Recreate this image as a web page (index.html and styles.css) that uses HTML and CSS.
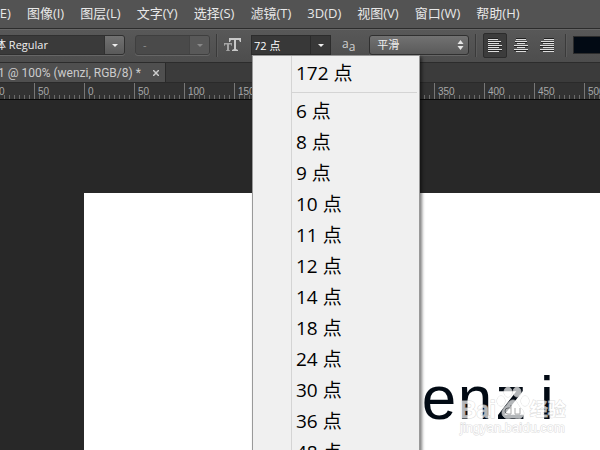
FILE: index.html
```html
<!DOCTYPE html>
<html lang="zh-CN">
<head>
  <meta charset="UTF-8">
  <meta name="viewport" content="width=device-width, initial-scale=1.0">
  <title>wenzi</title>
  <link rel="stylesheet" href="styles.css">
</head>
<body>
  <nav class="menubar">
    <a href="#">编辑(E)</a>
    <a href="#">图像(I)</a>
    <a href="#">图层(L)</a>
    <a href="#">文字(Y)</a>
    <a href="#">选择(S)</a>
    <a href="#">滤镜(T)</a>
    <a href="#">3D(D)</a>
    <a href="#">视图(V)</a>
    <a href="#">窗口(W)</a>
    <a href="#">帮助(H)</a>
  </nav>

  <div class="options">
    <div class="combo font-style">
      <select aria-label="字体样式"><option>黑体 Regular</option></select>
      <span class="arrow"></span>
    </div>
    <div class="combo weight">
      <select aria-label="字重" disabled><option>-</option></select>
      <span class="arrow"></span>
    </div>
    <span class="divider"></span>

    <label class="size-icon" for="font-size" aria-label="字体大小">
      <svg width="18" height="16" viewBox="0 0 18 16">
        <path d="M5 1h12v4h-1l-1-2h-3v9l2 1v1H8v-1l2-1V3H7L6 5H5z" fill="#c8c8c8"/>
        <path d="M0 6h8v3H7.500L7 7.500H5V13l1 .5v.5H2v-.5L3 13V7.500H1L.5 9H0z" fill="#a4a4a4"/>
      </svg>
    </label>
    <div class="size-box">
      <input id="font-size" type="text" value="72 点">
      <button class="size-open" aria-label="展开"><span class="tri"></span></button>
      <ul class="size-menu">
        <li>172 点</li>
        <li class="line"></li>
        <li>6 点</li>
        <li>8 点</li>
        <li>9 点</li>
        <li>10 点</li>
        <li>11 点</li>
        <li>12 点</li>
        <li>14 点</li>
        <li>18 点</li>
        <li>24 点</li>
        <li>30 点</li>
        <li>36 点</li>
        <li>48 点</li>
      </ul>
    </div>

    <label class="aa" for="smooth"><span>a</span><span class="low">a</span></label>
    <div class="combo smooth">
      <select id="smooth"><option>平滑</option></select>
      <svg class="updown" width="7" height="10" viewBox="0 0 7 10">
        <path d="M3.500 0L6.500 4h-6zM3.500 10L6.500 6h-6z" fill="#e6e6e6"/>
      </svg>
    </div>
    <span class="divider"></span>

    <div class="aligns">
      <button class="align active" aria-label="左对齐">
        <svg width="14" height="14" viewBox="0 0 14 14">
          <path d="M0 0h10v1H0zM0 4h13v1H0zM0 8h14v1H0zM0 12h14v1H0z" fill="#222"/>
          <path d="M0 1h10v1H0zM0 3h13v1H0zM0 5h11v1H0zM0 7h14v1H0zM0 9h11v1H0zM0 11h14v1H0zM0 13h11v1H0z" fill="#ddd"/>
        </svg>
      </button>
      <button class="align" aria-label="居中对齐">
        <svg width="14" height="14" viewBox="0 0 14 14">
          <path d="M2 0h10v1H2zM1 4h12v1H1zM0 8h14v1H0zM0 12h14v1H0z" fill="#222"/>
          <path d="M2 1h10v1H2zM1 3h12v1H1zM3 5h8v1H3zM0 7h14v1H0zM3 9h8v1H3zM0 11h14v1H0zM2 13h10v1H2z" fill="#ddd"/>
        </svg>
      </button>
      <button class="align" aria-label="右对齐">
        <svg width="14" height="14" viewBox="0 0 14 14">
          <path d="M4 0h10v1H4zM1 4h13v1H1zM0 8h14v1H0zM0 12h14v1H0z" fill="#222"/>
          <path d="M4 1h10v1H4zM1 3h13v1H1zM3 5h11v1H3zM0 7h14v1H0zM3 9h11v1H3zM0 11h14v1H0zM3 13h11v1H3z" fill="#ddd"/>
        </svg>
      </button>
    </div>
    <span class="divider"></span>
    <button class="swatch" aria-label="文本颜色"></button>
  </div>

  <div class="tabs">
    <div class="tab">
      <span class="name">1 @ 100% (wenzi, RGB/8) *</span>
      <button class="close" aria-label="关闭">
        <svg width="6" height="6" viewBox="0 0 6 6"><path d="M0 0l6 6M6 0L0 6" stroke="#ccc" stroke-width="1.500"/></svg>
      </button>
    </div>
  </div>

  <div class="ruler">
    <span>100</span><span>50</span><span>0</span><span>50</span><span>100</span><span>150</span><span>200</span><span>250</span><span>300</span><span>350</span><span>400</span><span>450</span><span>500</span>
  </div>

  <main class="workspace">
    <div class="canvas">
      <div class="art"><span class="w">w</span><span>e</span><span>n</span><span>z</span><span>i</span></div>
      <div class="mark">
        <div class="brand">
          <span>Bai</span>
          <svg width="34" height="34" viewBox="0 0 34 34">
            <g fill="#fff" stroke="#ccc">
              <ellipse cx="5" cy="15" rx="4" ry="5"/>
              <ellipse cx="12" cy="6" rx="4" ry="5"/>
              <ellipse cx="21" cy="6" rx="4" ry="5"/>
              <ellipse cx="29" cy="15" rx="4" ry="5"/>
              <path d="M17 14c-4 0-5 4-8 7s-4 6-2 9c3 4 6 2 10 2s8 2 10-2c2-3 0-6-3-9s-3-7-7-7z"/>
            </g>
            <path d="M15 19v9h-3a2 2 0 0 1 0-6h3M19 22v6h5v-6" fill="none" stroke="#888"/>
          </svg>
          <span class="cn">经验</span>
        </div>
        <div class="site">jingyan.baidu.com</div>
      </div>
    </div>
  </main>
</body>
</html>
```
FILE: styles.css
```css
* {
  margin: 0;
  padding: 0;
  box-sizing: border-box;
}

body {
  height: 100vh;
  display: flex;
  flex-direction: column;
  overflow: hidden;
  background: #282828;
  color: #e4e4e4;
  font-family: "Open Sans", "Noto Sans CJK SC", sans-serif;
  font-size: 12px;
}

button, input, select {
  font: inherit;
  color: inherit;
  border: none;
  background: none;
}

/* menu bar, scrolled past its left end */
.menubar {
  flex: none;
  height: 29px;
  display: flex;
  align-items: center;
  gap: 16px;
  margin-left: -30px;
  padding-bottom: 3px;
  font-size: 13px;
  background: #535353;
  border-bottom: 1px solid #2c2c2c;
}

.menubar a {
  color: #e8e8e8;
  text-decoration: none;
  white-space: nowrap;
}

/* options bar */
.options {
  flex: none;
  height: 34px;
  display: flex;
  align-items: center;
  margin-left: -24px;
  padding-bottom: 2px;
  font-size: 11px;
  background: linear-gradient(#585858, #4d4d4d);
  border-top: 1px solid #666;
  border-bottom: 1px solid #2c2c2c;
}

.options > * {
  flex: none;
}

.combo {
  position: relative;
  height: 20px;
  border: 1px solid #303030;
  border-radius: 3px;
  box-shadow: 0 1px 0 #666;
  background: #3a3a3a;
}

.combo select {
  appearance: none;
  width: 100%;
  height: 18px;
  padding-left: 7px;
  line-height: 18px;
  color: #f0f0f0;
  opacity: 1;
}

.arrow {
  position: absolute;
  top: 0;
  right: 0;
  width: 20px;
  height: 18px;
  display: grid;
  place-items: center;
  pointer-events: none;
  background: linear-gradient(#727272, #5a5a5a);
  border-left: 1px solid #303030;
  border-radius: 0 2px 2px 0;
}

.arrow::after, .tri {
  content: "";
  border: 3px solid transparent;
  border-top-color: #eee;
  border-bottom: none;
}

.font-style {
  width: 149px;
}

.weight {
  width: 75px;
  margin-left: 10px;
  background: #4a4a4a;
  border-color: #3f3f3f;
}

.combo select:disabled {
  color: #909090;
}

.weight .arrow {
  background: #595959;
  border-color: #444;
}

.weight .arrow::after {
  border-top-color: #888;
}

.divider {
  width: 2px;
  height: 23px;
  margin: 0 6px;
  background: #3a3a3a;
  border-right: 1px solid #5c5c5c;
}

.size-icon {
  height: 16px;
  display: flex;
}

.size-box {
  position: relative;
  display: flex;
  width: 80px;
  height: 20px;
  margin-left: 9px;
  background: #383838;
  border: 1px solid #2c2c2c;
}

.size-box input {
  flex: 1;
  min-width: 0;
  padding-left: 2px;
  color: #fff;
}

.size-open {
  width: 20px;
  display: grid;
  place-items: center;
  border-left: 1px solid #2a2a2a;
}

.size-menu {
  position: absolute;
  z-index: 5;
  top: 19px;
  left: 0;
  width: 168px;
  padding: 2px;
  list-style: none;
  color: #000;
  font-size: 19px;
  background: linear-gradient(90deg, transparent 38px, #d4d4d4 38px, #d4d4d4 39px, transparent 39px) #f0f0f0;
  border: 1px solid #999;
  box-shadow: 2px 2px 3px rgba(0, 0, 0, 0.5);
}

.size-menu li {
  height: 31px;
  padding-left: 41px;
  line-height: 31px;
}

.size-menu .line {
  height: 1px;
  margin: 3px 0 3px 36px;
  background: #d4d4d4;
}

.aa {
  display: flex;
  margin-left: 11px;
  font-size: 12px;
  line-height: 14px;
  color: #d0d0d0;
}

.aa .low {
  padding-top: 3px;
}

.smooth {
  width: 100px;
  margin-left: 14px;
  background: linear-gradient(#727272, #5a5a5a);
}

.updown {
  position: absolute;
  top: 4px;
  right: 4px;
  pointer-events: none;
}

.aligns {
  display: flex;
  gap: 2px;
}

.align {
  width: 24px;
  height: 25px;
  display: grid;
  place-items: center;
  border: 1px solid transparent;
  border-radius: 2px;
}

.align.active {
  background: #3c3c3c;
  border-color: #2c2c2c;
}

.options .swatch {
  flex: 1;
  height: 18px;
  background: #020a14;
  border: 1px solid #2c2c2c;
  border-right: none;
}

/* document tab */
.tabs {
  flex: none;
  height: 19px;
  display: flex;
  background: #3b3b3b;
}

.tab {
  display: flex;
  align-items: center;
  margin-left: -2px;
  background: #4f4f4f;
  border-right: 1px solid #2a2a2a;
  color: #ccc;
  font-family: Roboto, sans-serif;
}

.name {
  white-space: nowrap;
}

.close {
  display: flex;
  padding: 0 6px 0 12px;
}

/* ruler: a long tick every 50px, a short one every 5px */
.ruler {
  flex: none;
  height: 18px;
  display: flex;
  margin-left: -16px;
  overflow: hidden;
  color: #a8a8a8;
  font-family: "Liberation Sans", sans-serif;
  font-size: 10px;
  line-height: 18px;
  background:
    repeating-linear-gradient(90deg, #777 0 1px, transparent 1px 50px),
    repeating-linear-gradient(90deg, #6a6a6a 0 1px, transparent 1px 5px) 0 100% / 100% 4px no-repeat,
    #323232;
  border-top: 1px solid #2a2a2a;
  border-bottom: 1px solid #080808;
}

.ruler span {
  flex: none;
  width: 50px;
  padding-left: 4px;
}

/* work area */
.workspace {
  flex: 1;
  min-height: 0;
  padding: 93px 0 0 84px;
}

.canvas {
  position: relative;
  height: 100%;
  background: #fff;
}

.art {
  position: absolute;
  top: 170px;
  left: 285px;
  display: flex;
  color: #020a14;
  font-family: "Liberation Sans", sans-serif;
  font-size: 62px;
  line-height: 70px;
}

.art span {
  width: 36px;
  text-align: center;
}

.art .w {
  width: 52px;
}

.mark {
  position: absolute;
  top: 191px;
  left: 376px;
  opacity: 0.7;
  color: #fff;
  font-family: "Liberation Sans", "Noto Sans CJK SC", sans-serif;
  -webkit-text-stroke: 1px #ccc;
  paint-order: stroke fill;
}

.brand {
  display: flex;
  align-items: flex-end;
  height: 36px;
  font-size: 23px;
  font-weight: bold;
  line-height: 20px;
}

.brand .cn {
  font-size: 18px;
}

.site {
  font-size: 13px;
  line-height: 16px;
}
```
